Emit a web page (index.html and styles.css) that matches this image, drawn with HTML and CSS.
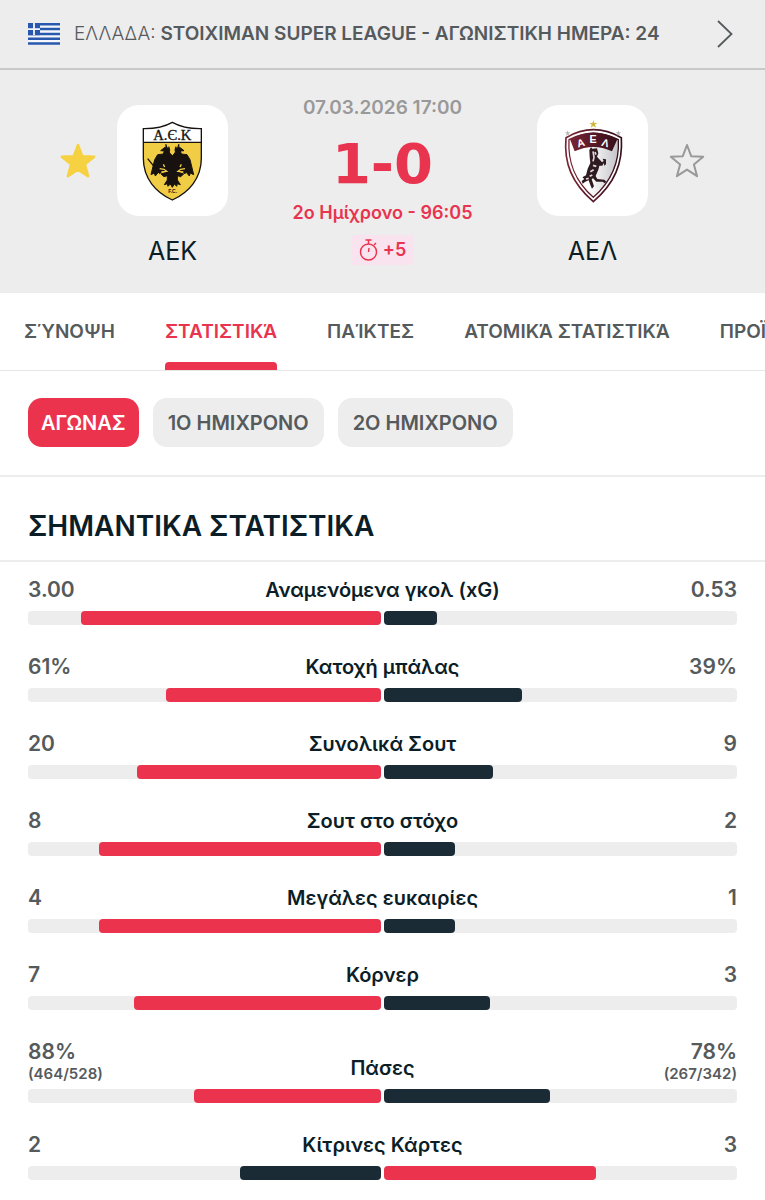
FILE: index.html
```html
<!DOCTYPE html>
<html lang="el">
<head>
<meta charset="utf-8">
<meta name="viewport" content="width=device-width, initial-scale=1">
<title>ΑΕΚ - ΑΕΛ</title>
<link rel="stylesheet" href="styles.css">
</head>
<body>
<header class="league">
  <svg class="flag" viewBox="0 0 32 22" aria-hidden="true">
    <rect width="32" height="22" fill="#f4f6fa"/>
    <path d="M0 1.2h32M0 6h32M0 11h32M0 15.8h32M0 20.6h32" stroke="#2857ae" stroke-width="2.5"/>
    <rect width="12" height="12.2" fill="#2857ae"/>
    <path d="M6 0v12.2M0 6.1h12" stroke="#f4f6fa" stroke-width="1.8"/>
  </svg>
  <a class="league-link" href="#league"><span class="country">ΕΛΛΑΔΑ:</span> <strong>STOIXIMAN SUPER LEAGUE - ΑΓΩΝΙΣΤΙΚΗ ΗΜΕΡΑ: 24</strong></a>
  <svg class="chevron" viewBox="0 0 16 28" aria-hidden="true"><path d="M1 1l13.500 13L1 27" fill="none" stroke="#555a5c" stroke-width="1.8"/></svg>
</header>

<main>
<section class="match">
  <button class="fav" aria-label="Αγαπημένη ομάδα ΑΕΚ" aria-pressed="true">
    <svg viewBox="0 0 36 36"><path d="M18 2l4.200 11.200 12 .6-9.300 7.600 3.200 11.800L18 26.600 7.900 33.200l3.200-11.800L1.800 13.800l12-.6z" fill="#f6d142" stroke="#f6d142" stroke-width="2.500" stroke-linejoin="round"/></svg>
  </button>
  <div class="team">
    <div class="crest">
      <svg viewBox="0 0 333 333" role="img" aria-label="ΑΕΚ">
        <path d="M79 71Q130 72 166 52Q202 72 253 71V160C253 220 216 262 166 285C116 262 79 220 79 160Z" fill="#fff"/>
        <path d="M79 112H253V160C253 220 216 262 166 285C116 262 79 220 79 160Z" fill="#f1cd46"/>
        <path d="M79 71Q130 72 166 52Q202 72 253 71V160C253 220 216 262 166 285C116 262 79 220 79 160ZM79 112H253" fill="none" stroke="#17120f" stroke-width="4"/>
        <text x="166" y="104" text-anchor="middle" class="aek-name">Α.Є.Κ</text>
        <path d="M166 152L158 144L155 130L145 126L131 137L142 138L139 147L122 149L113 164L102 209L112 204L115 213L124 202L128 206L138 198L146 202L132 207L141 215L151 212L151 225L142 239L151 236L153 244L160 237L166 247L172 237L179 244L181 236L190 239L181 225L181 212L191 215L200 207L186 202L194 198L204 206L208 202L217 213L220 204L230 209L219 164L210 149L193 147L190 138L201 137L187 126L177 130L174 144Z" fill="#17120f" stroke="#17120f" stroke-width="3" stroke-linejoin="round"/>
        <path d="M92 161l34 42M149 126l-3-8M183 126l3-8M158 137l-3-12M174 137l3-12" stroke="#17120f" stroke-width="4"/>
        <path d="M128 191l13 2 8 6-16 2M204 191l-13 2-8 6 16 2M139 178l4 8M193 178l-4 8" fill="none" stroke="#f1cd46" stroke-width="4"/>
        <text x="167" y="264" text-anchor="middle" class="aek-fc">F.C.</text>
      </svg>
    </div>
    <span class="team-name">ΑΕΚ</span>
  </div>
  <div class="scorebox">
    <time class="date" datetime="2026-03-07T17:00">07.03.2026 17:00</time>
    <div class="score">1-0</div>
    <div class="period">2ο Ημίχρονο - 96:05</div>
    <div class="added">
      <svg class="watch" viewBox="0 0 20 22" aria-hidden="true"><g fill="none" stroke="#e8344e" stroke-width="1.4"><circle cx="9.500" cy="13" r="8"/><path d="M6.500 1h6M9.500 1v4M15 6l2-2M9.500 13l.5-4"/></g></svg>
      <span>+5</span>
    </div>
  </div>
  <div class="team">
    <div class="crest">
      <svg viewBox="0 0 333 333" role="img" aria-label="ΑΕΛ">
        <defs><linearGradient id="silver"><stop offset=".4" stop-color="#fff"/><stop offset="1" stop-color="#c3c2c8"/></linearGradient><linearGradient id="maroon"><stop offset="0" stop-color="#792434"/><stop offset="1" stop-color="#35101a"/></linearGradient></defs>
        <path d="M87 98Q169 50 253 98C258 175 233 235 169 290C105 235 80 175 87 98Z" fill="#fff" stroke="url(#maroon)" stroke-width="5"/>
        <path d="M96 104Q169 65 244 104C248 171 226 226 169 277C112 226 92 171 96 104Z" fill="url(#silver)" stroke="url(#maroon)" stroke-width="4"/>
        <path d="M99 103Q169 62 241 103L225 139Q169 113 113 139Z" fill="url(#maroon)"/>
        <g class="ael-name"><text x="131" y="125" text-anchor="middle" transform="rotate(-15 131 114)">Α</text><text x="168" y="115" text-anchor="middle">Ε</text><text x="205" y="125" text-anchor="middle" transform="rotate(15 205 114)">Λ</text></g>
        <path d="M157 135L162 127L166 131L180 130L184 145L180 155L189 165L195 172L200 168L197 161L207 163L207 178L202 182L200 174L196 182L187 182L184 194L176 213L181 222L202 224L208 230L203 235L197 230L178 230L168 220L164 223L171 244L165 251L160 240L155 226L145 230L137 236L134 228L142 222L136 217L147 211L152 191L160 174L158 156Z" fill="#2d1b20"/>
        <path d="M168 139l3 18-3 12M174 141l3 8M168 181l10 3M160 200l10-6M158 214l8-4M147 222l8-2" fill="none" stroke="#ddd6d8" stroke-width="5"/>
        <path d="M169 46l3 8h9l-7 5 3 9-8-5-8 5 3-9-7-5h9z" fill="#d1b742"/>
        <path id="small-star" d="M92 76l2 6h6l-5 4 2 6-5-3-5 3 2-6-5-4h6z" fill="#b5b6b9"/>
        <use href="#small-star" x="152"/>
      </svg>
    </div>
    <span class="team-name">ΑΕΛ</span>
  </div>
  <button class="fav" aria-label="Αγαπημένη ομάδα ΑΕΛ" aria-pressed="false">
    <svg viewBox="0 0 36 36"><path d="M18 2l4.200 11.200 12 .6-9.300 7.600 3.200 11.800L18 26.600 7.900 33.200l3.200-11.800L1.800 13.800l12-.6z" fill="none" stroke="#999" stroke-width="2" stroke-linejoin="round"/></svg>
  </button>
</section>

<nav class="tabs">
  <a href="#synopsi">ΣΎΝΟΨΗ</a>
  <a href="#statistika" class="current" aria-current="page">ΣΤΑΤΙΣΤΙΚΆ</a>
  <a href="#paiktes">ΠΑΊΚΤΕΣ</a>
  <a href="#atomika">ΑΤΟΜΙΚΆ ΣΤΑΤΙΣΤΙΚΆ</a>
  <a href="#proistoria">ΠΡΟΪΣΤΟΡΊΑ</a>
</nav>

<div class="filters">
  <button class="chip active" aria-pressed="true">ΑΓΩΝΑΣ</button>
  <button class="chip" aria-pressed="false">1Ο ΗΜΙΧΡΟΝΟ</button>
  <button class="chip" aria-pressed="false">2Ο ΗΜΙΧΡΟΝΟ</button>
</div>

<section>
  <h2 class="section-title">ΣΗΜΑΝΤΙΚΑ ΣΤΑΤΙΣΤΙΚΑ</h2>
  <ul class="stats">
    <li class="stat"><div class="values"><span class="value">3.00</span><span class="label">Αναμενόμενα γκολ (xG)</span><span class="value">0.53</span></div><div class="bars"><div class="track home"><i class="lead" style="width:85%"></i></div><div class="track"><i style="width:15%"></i></div></div></li>
    <li class="stat"><div class="values"><span class="value">61%</span><span class="label">Κατοχή μπάλας</span><span class="value">39%</span></div><div class="bars"><div class="track home"><i class="lead" style="width:61%"></i></div><div class="track"><i style="width:39%"></i></div></div></li>
    <li class="stat"><div class="values"><span class="value">20</span><span class="label">Συνολικά Σουτ</span><span class="value">9</span></div><div class="bars"><div class="track home"><i class="lead" style="width:69%"></i></div><div class="track"><i style="width:31%"></i></div></div></li>
    <li class="stat"><div class="values"><span class="value">8</span><span class="label">Σουτ στο στόχο</span><span class="value">2</span></div><div class="bars"><div class="track home"><i class="lead" style="width:80%"></i></div><div class="track"><i style="width:20%"></i></div></div></li>
    <li class="stat"><div class="values"><span class="value">4</span><span class="label">Μεγάλες ευκαιρίες</span><span class="value">1</span></div><div class="bars"><div class="track home"><i class="lead" style="width:80%"></i></div><div class="track"><i style="width:20%"></i></div></div></li>
    <li class="stat"><div class="values"><span class="value">7</span><span class="label">Κόρνερ</span><span class="value">3</span></div><div class="bars"><div class="track home"><i class="lead" style="width:70%"></i></div><div class="track"><i style="width:30%"></i></div></div></li>
    <li class="stat"><div class="values"><span class="value">88%<small>(464/528)</small></span><span class="label">Πάσες</span><span class="value">78%<small>(267/342)</small></span></div><div class="bars"><div class="track home"><i class="lead" style="width:53%"></i></div><div class="track"><i style="width:47%"></i></div></div></li>
    <li class="stat"><div class="values"><span class="value">2</span><span class="label">Κίτρινες Κάρτες</span><span class="value">3</span></div><div class="bars"><div class="track home"><i style="width:40%"></i></div><div class="track"><i class="lead" style="width:60%"></i></div></div></li>
  </ul>
</section>
</main>
</body>
</html>
```
FILE: styles.css
```css
* { box-sizing: border-box; }

body {
  margin: 0;
  background: #fff;
  color: #0b1e27;
  font-family: Inter, "Noto Sans", sans-serif;
  font-weight: 600;
  overflow-x: hidden;
}

button { border: 0; padding: 0; background: none; font: inherit; color: inherit; }
a { color: inherit; text-decoration: none; }
svg { display: block; }

.league {
  display: flex;
  align-items: center;
  height: 70px;
  padding: 0 32px 0 28px;
  background: #ededed;
  border-bottom: 2px solid #c8c9cb;
  color: #555a5c;
  font-size: 19px;
  line-height: 24px;
}
.flag { width: 32px; height: 22px; margin-right: 14px; flex: none; }
.league-link { flex: 1; white-space: nowrap; }
.league-link strong { font-weight: 600; }
.country { font-weight: 300; }
.chevron { width: 16px; height: 28px; flex: none; }

.match {
  display: grid;
  grid-template-columns: 36px 111px 1fr 111px 36px;
  column-gap: 21px;
  padding: 35px 60px 27px;
  background: #ededed;
}
.fav { width: 36px; height: 111px; display: flex; align-items: center; }
.fav svg { width: 36px; height: 36px; }
.team { text-align: center; }
.crest { height: 111px; border-radius: 22px; background: #fff; overflow: hidden; }
.crest svg { width: 100%; height: 100%; }
.aek-name { font: 400 44px "Liberation Serif", serif; fill: #17120f; stroke: #17120f; stroke-width: 1px; }
.aek-fc { font: 700 15px "Liberation Sans", sans-serif; fill: #17120f; }
.ael-name { font: 700 32px "Liberation Sans", sans-serif; fill: #fff; }
.team-name { display: block; margin-top: 20px; font-size: 25px; line-height: 30px; font-weight: 400; }

.scorebox { display: flex; flex-direction: column; align-items: center; color: #e8344e; white-space: nowrap; }
.date { margin-top: -9px; color: #999; font-size: 19px; line-height: 24px; }
.score { font: 700 56px/60px "DejaVu Sans", sans-serif; margin-top: 14px; }
.period { margin-top: 7px; font-size: 18px; line-height: 24px; }
.added { display: flex; align-items: center; gap: 4px; margin-top: 10px; padding: 0 8px; background: #f9e3ee; border-radius: 4px; font-size: 18px; line-height: 30px; }
.watch { width: 20px; height: 22px; }

.tabs {
  display: flex;
  gap: 50px;
  height: 78px;
  padding-left: 24px;
  overflow: hidden;
  border-bottom: 1px solid #e6e6e6;
  color: #555a5c;
  font-size: 19px;
  line-height: 77px;
  white-space: nowrap;
}
.tabs a { position: relative; }
.tabs .current { color: #e8344e; }
.current::after { content: ""; position: absolute; left: 0; right: 0; bottom: 0; height: 8px; border-radius: 4px 4px 0 0; background: #eb334d; }

.filters { display: flex; gap: 14px; padding: 27px 28px 28px; border-bottom: 2px solid #ededed; }
.chip { height: 49px; padding: 0 15px; border-radius: 14px; background: #ededed; color: #555a5c; font-size: 20px; white-space: nowrap; }
.chip.active { padding: 0 13px; background: #eb334d; color: #fff; }

.section-title { margin: 0; padding: 32px 28px 17px; border-bottom: 2px solid #ededed; font-size: 28px; line-height: 34px; font-weight: 600; }

.stats { list-style: none; margin: 0; padding: 14px 28px 0; }
.stat { margin-bottom: 28px; }
.values { display: grid; grid-template-columns: 1fr auto 1fr; align-items: end; line-height: 28px; margin-bottom: 7px; }
.value { color: #555a5c; font-size: 21px; }
.value:last-child { text-align: right; }
.value small { display: block; font-size: 15px; line-height: 16px; }
.label { font-size: 20px; }
.bars { display: grid; grid-template-columns: 1fr 1fr; gap: 3px; }
.track { display: flex; height: 14px; border-radius: 4px; background: #ededed; }
.home { justify-content: flex-end; }
.track i { background: #1b2b36; border-radius: 4px; }
.track .lead { background: #eb334d; }
```
